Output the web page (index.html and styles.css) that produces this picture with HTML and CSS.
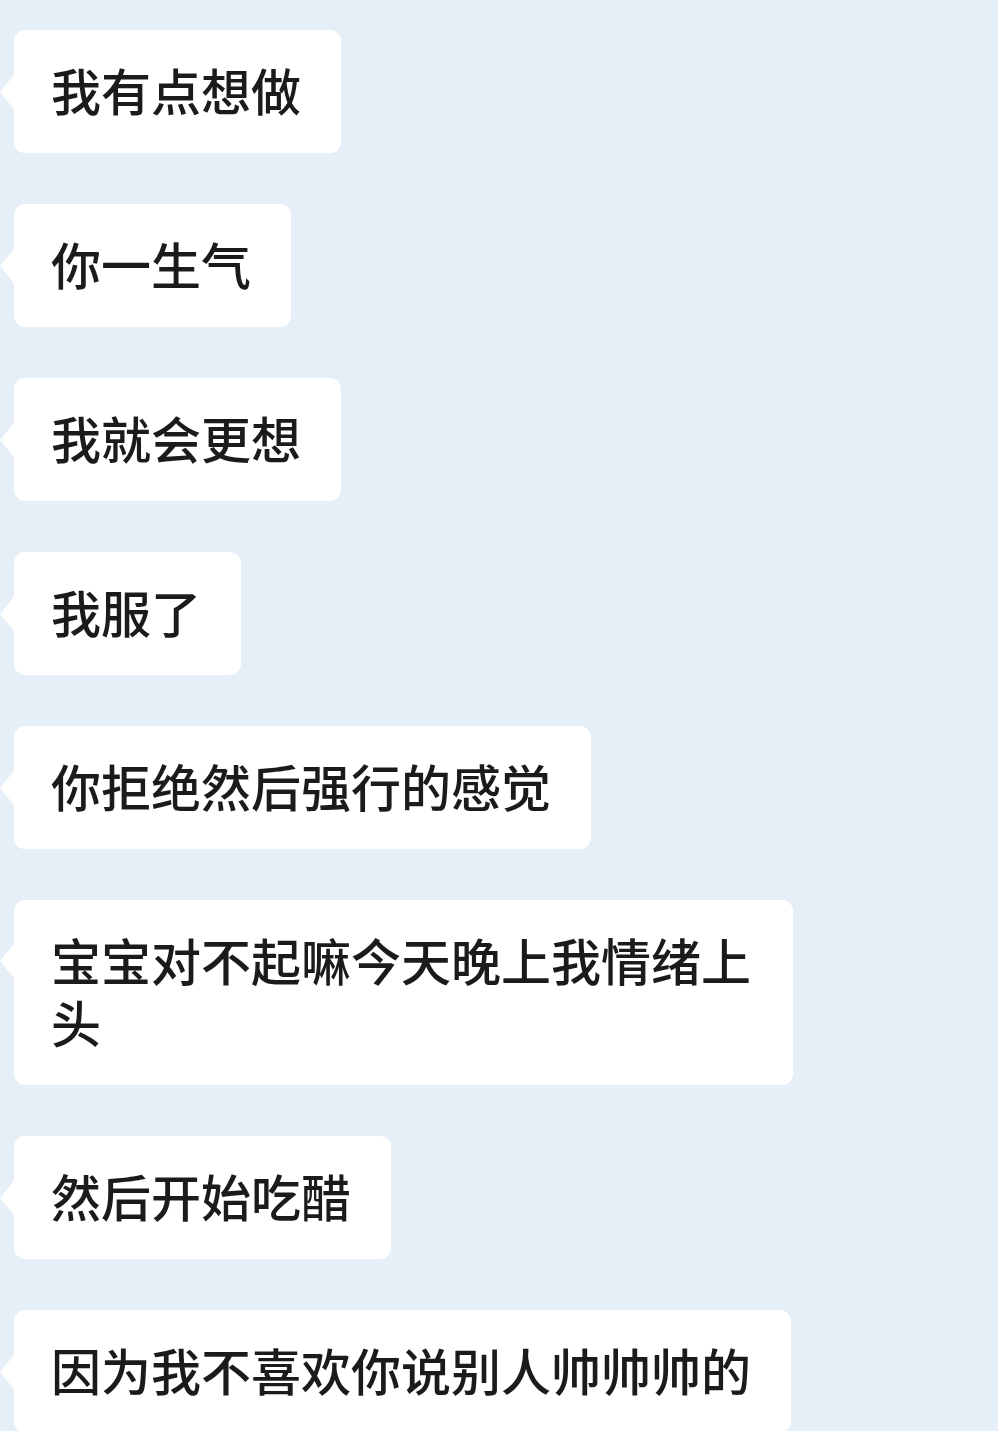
FILE: index.html
```html
<!DOCTYPE html>
<html lang="zh-CN">
<head>
<meta charset="utf-8">
<title>聊天</title>
<link rel="stylesheet" href="styles.css">
</head>
<body>
<main class="chat">
  <div class="msg"><div class="bubble">我有点想做</div></div>
  <div class="msg"><div class="bubble">你一生气</div></div>
  <div class="msg"><div class="bubble">我就会更想</div></div>
  <div class="msg"><div class="bubble">我服了</div></div>
  <div class="msg"><div class="bubble">你拒绝然后强行的感觉</div></div>
  <div class="msg"><div class="bubble">宝宝对不起嘛今天晚上我情绪上头</div></div>
  <div class="msg"><div class="bubble">然后开始吃醋</div></div>
  <div class="msg"><div class="bubble">因为我不喜欢你说别人帅帅帅的</div></div>
</main>
</body>
</html>
```
FILE: styles.css
```css
html, body {
  margin: 0;
  padding: 0;
  background: #e6eef7;
}

body {
  width: 998px;
  height: 1431px;
  overflow: hidden;
}

.chat {
  display: flex;
  flex-direction: column;
  align-items: flex-start;
  gap: 51px;
  padding: 30px 0 0 0;
}

.msg {
  display: flex;
  padding-left: 14px;
}

.bubble {
  position: relative;
  background: #ffffff;
  border-radius: 11px;
  padding: 28px 40px 33px 37px;
  max-width: 702px;
  font-family: "Noto Sans CJK SC", "Noto Sans", sans-serif;
  font-size: 50px;
  font-weight: 500;
  line-height: 62px;
  color: #1b1b1b;
  word-break: break-all;
}

/* little pointer on the left side of each bubble */
.bubble::before {
  content: "";
  position: absolute;
  left: -14px;
  top: calc(50% - 17px);
  width: 0;
  height: 0;
  border-top: 17px solid transparent;
  border-bottom: 17px solid transparent;
  border-right: 14px solid #ffffff;
}

.msg:nth-child(6) .bubble::before {
  top: 44px;
}
```
